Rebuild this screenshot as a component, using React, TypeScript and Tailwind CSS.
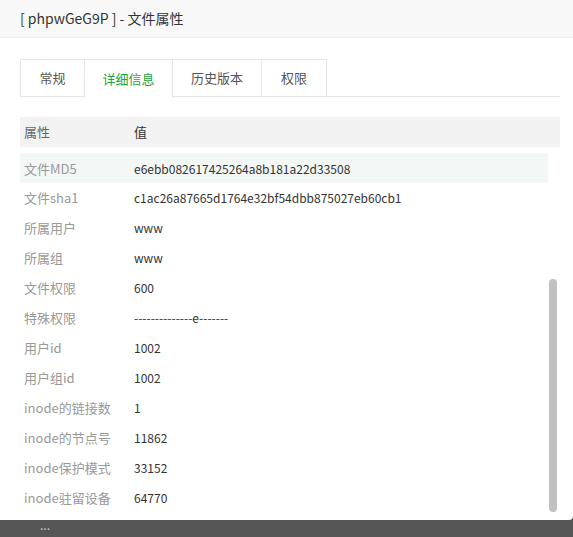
const rows: [string, string][] = [
  ['文件MD5', 'e6ebb082617425264a8b181a22d33508'],
  ['文件sha1', 'c1ac26a87665d1764e32bf54dbb875027eb60cb1'],
  ['所属用户', 'www'],
  ['所属组', 'www'],
  ['文件权限', '600'],
  ['特殊权限', '--------------e-------'],
  ['用户id', '1002'],
  ['用户组id', '1002'],
  ['inode的链接数', '1'],
  ['inode的节点号', '11862'],
  ['inode保护模式', '33152'],
  ['inode驻留设备', '64770'],
];

const tabs = ['常规', '详细信息', '历史版本', '权限'];
const tabW = ['w-[65px]', 'w-[88px]', 'w-[89px]', 'w-[65px]'];

export default function App() {
  return (
    <div className="w-[573px] h-[537px] bg-[#555] flex flex-col overflow-hidden text-[13px]" style={{ fontFamily: '"Microsoft YaHei", "Noto Sans CJK SC", sans-serif' }}>
      <div className="h-[520px] bg-white flex flex-col rounded-br-sm">
        <div className="h-[38px] bg-[#f8f8f8] border-b border-[#eee] flex items-center px-5 text-[14px] text-[#333] shrink-0">
          [ phpwGeG9P ] - 文件属性
        </div>
        <div className="pl-5 pt-[21px] flex flex-col flex-1 min-h-0">
          <div className="flex h-[38px] border-b border-[#e6e6e6] shrink-0 mr-[13px]">
            {tabs.map((t, i) => (
              <div
                key={t}
                className={`${tabW[i]} flex items-center justify-center border-t border-r border-[#e6e6e6] ${i === 0 ? 'border-l' : ''} ${i === 1 ? 'text-[#20a53a] bg-white h-[39px]' : 'text-[#555]'}`}
              >
                {t}
              </div>
            ))}
          </div>
          <div className="mt-[20px] h-[30px] bg-[#f2f2f2] flex items-center text-[#666] shrink-0 mr-[13px]">
            <span className="w-[114px] pl-1">属性</span>
            <span className="text-[#333]">值</span>
          </div>
          <div className="flex flex-1 min-h-0 pb-1">
            <div className="flex-1 pt-[6px]">
              {rows.map(([k, v], i) => (
                <div key={k} className={`h-[30px] flex items-center ${i === 0 ? 'bg-[#f3f8f6] pt-[1px]' : ''}`}>
                  <span className="w-[114px] pl-1 text-[#999]">{k}</span>
                  <span className="text-[#333] text-[12px]">{v}</span>
                </div>
              ))}
            </div>
            <div className="w-[25px] flex flex-col pl-[1px]">
              <div className="h-[132px]" />
              <div className="w-[8px] h-[233px] bg-[#c1c1c1] rounded-sm" />
            </div>
          </div>
        </div>
      </div>
      <div className="pl-10 text-[12px] text-[#ccc] leading-none -mt-[1px]">...</div>
    </div>
  );
}
